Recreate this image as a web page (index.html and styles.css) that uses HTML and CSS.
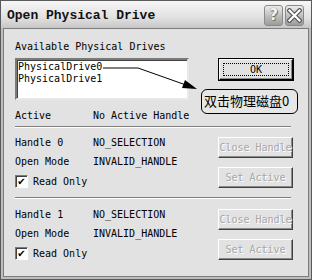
FILE: index.html
```html
<!DOCTYPE html>
<html lang="en">
<head>
    <meta charset="UTF-8">
    <title>Open Physical Drive</title>
    <link rel="stylesheet" href="styles.css">
</head>
<body>
    <div class="window">
        <div class="titlebar">
            <span class="title">Open Physical Drive</span>
            <div class="caption-buttons">
                <span class="cap-btn help">?</span>
                <span class="cap-btn close">
                    <svg width="15" height="15" viewBox="0 0 15 15">
                        <path d="M2.5 2.5 L12.5 12.5 M12.5 2.5 L2.5 12.5" stroke="#555" stroke-width="4.5" stroke-linecap="square"/>
                        <path d="M2.5 2.5 L12.5 12.5 M12.5 2.5 L2.5 12.5" stroke="#fff" stroke-width="2.2" stroke-linecap="square"/>
                    </svg>
                </span>
            </div>
        </div>

        <div class="client">
            <div class="top">
                <div class="drives">
                    <div class="label">Available Physical Drives</div>
                    <div class="listbox">
                        <div class="item">PhysicalDrive0</div>
                        <div class="item">PhysicalDrive1</div>
                    </div>
                    <div class="field-row">
                        <span class="key">Active</span>
                        <span>No Active Handle</span>
                    </div>
                </div>
                <button class="btn default"><span class="focus">OK</span></button>
            </div>

            <div class="sep"></div>

            <div class="handle">
                <div class="fields">
                    <span>Handle 0</span><span>NO_SELECTION</span>
                    <span>Open Mode</span><span>INVALID_HANDLE</span>
                    <label class="check"><span class="box">&#10004;</span>Read Only</label>
                </div>
                <div class="buttons">
                    <button class="btn" disabled>Close Handle</button>
                    <button class="btn" disabled>Set Active</button>
                </div>
            </div>

            <div class="sep"></div>

            <div class="handle second">
                <div class="fields">
                    <span>Handle 1</span><span>NO_SELECTION</span>
                    <span>Open Mode</span><span>INVALID_HANDLE</span>
                    <label class="check"><span class="box">&#10004;</span>Read Only</label>
                </div>
                <div class="buttons">
                    <button class="btn" disabled>Close Handle</button>
                    <button class="btn" disabled>Set Active</button>
                </div>
            </div>
        </div>

        <!-- annotation drawn over the dialog -->
        <svg class="arrow" width="312" height="280" viewBox="0 0 312 280">
            <polyline points="103,68 138,68 186,85" fill="none" stroke="#000" stroke-width="1"/>
            <polygon points="197,89 182,88 185,80" fill="#000"/>
        </svg>
        <div class="callout">双击物理磁盘0</div>
    </div>
</body>
</html>
```

FILE: styles.css
```css
* {
    margin: 0;
    padding: 0;
    box-sizing: border-box;
}

body {
    background-color: #fff;
    font-family: "DejaVu Sans Mono", "Liberation Mono", monospace;
    font-size: 10px;
    color: #000;
}

.window {
    position: relative;
    width: 312px;
    height: 280px;
    border: 1px solid #5a5a5a;
    background-color: #bdbdbd;
    display: flex;
    flex-direction: column;
}

.titlebar {
    height: 27px;
    display: flex;
    align-items: center;
    justify-content: space-between;
    padding: 1px 7px 0 6px;
    background: linear-gradient(#f6f6f6, #e2e2e2 60%, #c6c6c6);
}

.title {
    font-family: "Liberation Mono", monospace;
    font-weight: bold;
    font-size: 13px;
    color: #111;
}

.caption-buttons {
    display: flex;
    gap: 2px;
}

.cap-btn {
    width: 19px;
    height: 21px;
    border: 1px solid #8a8a8a;
    border-radius: 3px;
    background: linear-gradient(#ececec, #bcbcbc 55%, #9c9c9c);
    display: flex;
    align-items: center;
    justify-content: center;
}

.help {
    font-family: "DejaVu Sans", sans-serif;
    font-size: 15px;
    font-weight: bold;
    color: #f4f4f4;
    text-shadow: 0 0 1px #555, 1px 1px 0 #777;
}

.client {
    flex: 1;
    margin: 0 2px 2px;
    border: 1px solid #7c7c7c;
    background-color: #e2e2e2;
    padding: 12px 15px 0 11px;
}

.top {
    display: flex;
    gap: 30px;
}

.drives {
    width: 174px;
    white-space: nowrap;
}

.label {
    line-height: 12px;
}

.listbox {
    width: 174px;
    height: 42px;
    margin-top: 5px;
    padding: 1px 1px;
    background-color: #fff;
    border: 2px solid;
    border-color: #7a7a7a #e8e8e8 #e8e8e8 #7a7a7a;
    box-shadow: inset 1px 1px 0 #404040;
}

.item {
    line-height: 12px;
}

.field-row {
    display: flex;
    margin-top: 10px;
    line-height: 12px;
}

.key {
    width: 78px;
    flex-shrink: 0;
}

.btn {
    width: 75px;
    height: 21px;
    font-family: "DejaVu Sans Mono", "Liberation Mono", monospace;
    font-size: 10px;
    color: #000;
    background-color: #e2e2e2;
    border: 1px solid;
    border-color: #fff #404040 #404040 #fff;
    box-shadow: inset -1px -1px 0 #8a8a8a;
}

.btn:disabled {
    color: #a6a6a6;
    text-shadow: 1px 1px 0 #fff;
}

.default {
    margin-top: 18px;
    outline: 1px solid #000;
    outline-offset: 0;
    border-color: #fff #000 #000 #fff;
    padding: 3px;
}

.focus {
    display: block;
    height: 100%;
    border: 1px dotted #000;
    line-height: 11px;
}

.sep {
    margin: 4px 2px 0 0;
    height: 2px;
    border-top: 1px solid #7e7e7e;
    border-bottom: 1px solid #fff;
}

.handle {
    display: flex;
    justify-content: space-between;
    padding: 9px 0;
}

.handle.second {
    padding-top: 10px;
}

.handle + .sep {
    margin-top: 0;
}

.fields {
    display: grid;
    grid-template-columns: 78px auto;
    row-gap: 7px;
    line-height: 12px;
    align-content: start;
}

.check {
    grid-column: 1 / 3;
    display: flex;
    align-items: center;
    gap: 5px;
    height: 13px;
}

.box {
    width: 13px;
    height: 13px;
    background-color: #fff;
    border: 1px solid;
    border-color: #7a7a7a #fff #fff #7a7a7a;
    box-shadow: inset 1px 1px 0 #404040;
    font-family: "DejaVu Sans", sans-serif;
    font-size: 10px;
    line-height: 11px;
    text-align: center;
    font-weight: bold;
}

.buttons {
    display: flex;
    flex-direction: column;
    gap: 9px;
}

.arrow {
    position: absolute;
    left: -1px;
    top: -1px;
}

.callout {
    position: absolute;
    left: 200px;
    top: 88px;
    width: 97px;
    height: 25px;
    border: 1px solid #000;
    border-radius: 6px;
    background-color: #e6e6e6;
    font-family: "Noto Sans CJK SC", sans-serif;
    font-size: 13px;
    line-height: 22px;
    padding-left: 2px;
}
```
